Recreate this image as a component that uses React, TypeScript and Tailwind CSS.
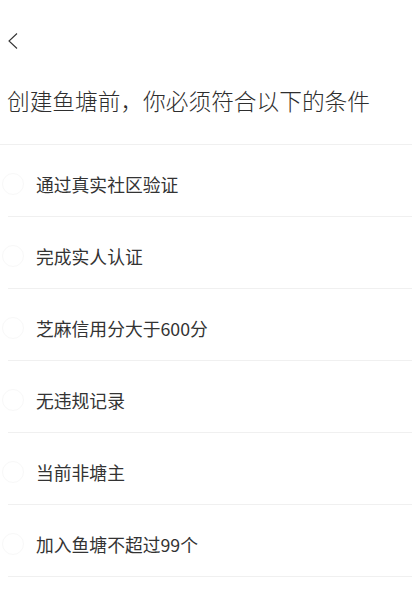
const items = [
  "通过真实社区验证",
  "完成实人认证",
  "芝麻信用分大于600分",
  "无违规记录",
  "当前非塘主",
  "加入鱼塘不超过99个",
];

export default function App() {
  return (
    <div
      className="min-h-[602px] w-[412px] bg-white text-[#333]"
      style={{ fontFamily: '"Noto Sans CJK SC", "Noto Sans", sans-serif' }}
    >
      <div className="flex h-[85px] items-start pl-[7px] pt-[32px]">
        <svg width="12" height="18" viewBox="0 0 12 18" fill="none">
          <path d="M10 1.5 L2 9 L10 16.5" stroke="#333" strokeWidth="1.1" />
        </svg>
      </div>
      <h1 className="pl-[7px] text-[22.7px] font-light leading-[32px] text-[#2e2e2e]">
        创建鱼塘前，你必须符合以下的条件
      </h1>
      <div className="mt-[27px] border-b border-[#f0f0f0]" />
      <ul>
        {items.map((t) => (
          <li key={t} className="ml-[8px] flex h-[72px] items-center border-b border-[#f0f0f0] pt-[6px]">
            <span className="-ml-[6px] mr-[12px] h-[22px] w-[22px] rounded-full border border-[#f8f8f8]" />
            <span className="text-[17.8px] leading-[24px] text-[#333]">{t}</span>
          </li>
        ))}
      </ul>
    </div>
  );
}
